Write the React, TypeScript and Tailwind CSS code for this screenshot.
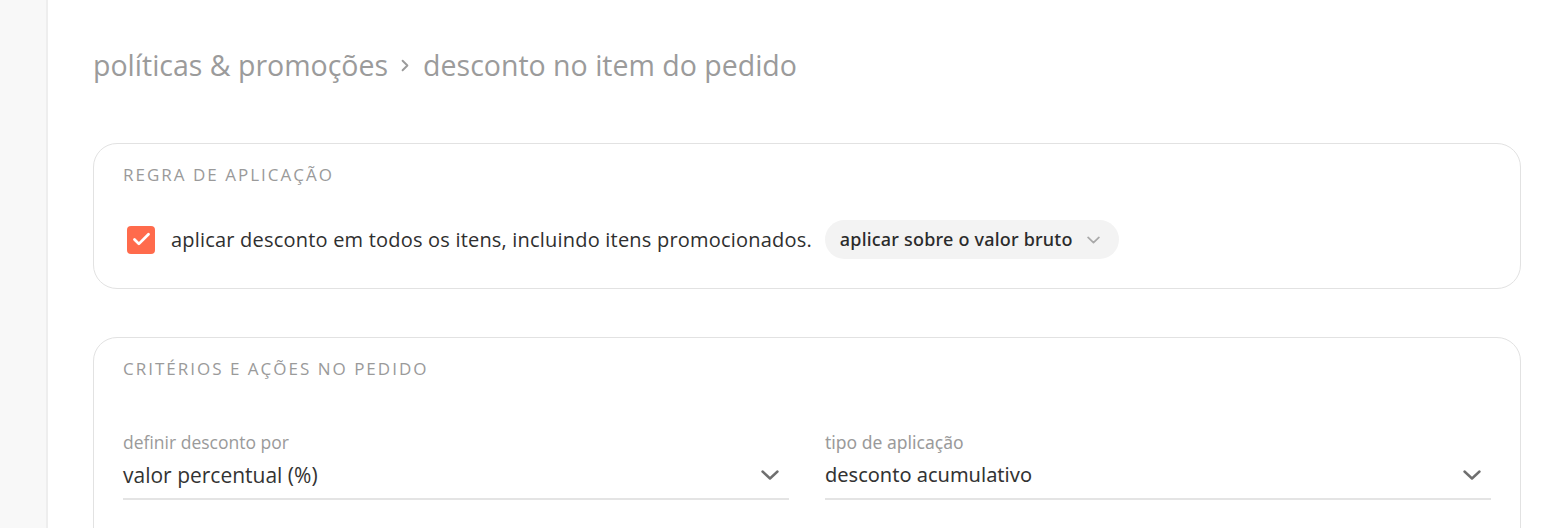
import { Check } from "lucide-react";

const nunito = { fontFamily: '"Open Sans", "Noto Sans", sans-serif' };

function Chevron({ className }: { className?: string }) {
  return (
    <svg viewBox="0 0 18 10" className={className} fill="none">
      <polyline
        points="1.5,1.5 9,8.5 16.5,1.5"
        stroke="currentColor"
        strokeWidth="2.4"
        strokeLinecap="round"
        strokeLinejoin="round"
      />
    </svg>
  );
}

function SelectField({
  label,
  value,
  alt,
}: {
  label: string;
  value: string;
  alt?: boolean;
}) {
  const font = alt ? "font-['Noto_Sans',sans-serif]" : "font-['Open_Sans',sans-serif]";
  return (
    <div className="flex-1">
      <div className={`${font} text-[17.5px] leading-[24px] text-[#9a9a9a]`}>{label}</div>
      <div className="mt-[7px] flex items-center justify-between border-b-2 border-[#e4e4e4] pb-[9px]">
        <span className={`${font} ${alt ? "text-[20px]" : "text-[21px]"} leading-[28px] text-[#333]`}>
          {value}
        </span>
        <Chevron className="mr-[10px] h-[10px] w-[18px] text-[#6f6f6f]" />
      </div>
    </div>
  );
}

export default function App() {
  return (
    <div className="flex h-[528px] overflow-hidden bg-white" style={nunito}>
      <aside className="w-[48px] shrink-0 border-r-2 border-[#eeeeee] bg-[#f8f8f8]" />

      <main className="flex-1 pl-[45px] pr-[47px] pt-[45px]">
        {/* breadcrumb */}
        <div className="flex items-center text-[28.5px] leading-[40px] text-[#9b9b9b]">
          <span>políticas &amp; promoções</span>
          <svg viewBox="0 0 10 16" className="ml-[13px] mr-[14px] h-[13px] w-[8px]" fill="none">
            <polyline
              points="2,2 8,8 2,14"
              stroke="currentColor"
              strokeWidth="2.4"
              strokeLinecap="round"
              strokeLinejoin="round"
            />
          </svg>
          <span>desconto no item do pedido</span>
        </div>

        {/* regra de aplicação */}
        <section className="mt-[58px] rounded-[24px] border border-[#e2e2e2] px-[29px] pb-[29px] pt-[20px]">
          <h3 className="text-[17px] uppercase leading-[22px] tracking-[2px] text-[#9a9a9a]">
            regra de aplicação
          </h3>
          <div className="mt-[34px] flex items-center">
            <span className="ml-[4px] flex h-[28px] w-[28px] items-center justify-center rounded-[4px] bg-[#ff6b4c]">
              <Check className="h-[21px] w-[21px] text-white" strokeWidth={3.2} />
            </span>
            <span className="ml-[16px] text-[20px] leading-[28px] tracking-[0.2px] text-[#2f2f2f]">
              aplicar desconto em todos os itens, incluindo itens promocionados.
            </span>
            <button className="ml-[13px] flex h-[39px] items-center rounded-full bg-[#f3f3f3] pl-[15px] pr-[19px] font-['Noto_Sans',sans-serif] text-[18px] font-medium tracking-[0.2px] text-[#2b2b2b]">
              aplicar sobre o valor bruto
              <Chevron className="ml-[14px] h-[8px] w-[13px] text-[#a8a8a8]" />
            </button>
          </div>
        </section>

        {/* critérios e ações */}
        <section className="mt-[48px] h-[300px] rounded-[24px] border border-[#e2e2e2] px-[29px] pt-[20px]">
          <h3 className="text-[17px] uppercase leading-[22px] tracking-[2px] text-[#9a9a9a]">
            critérios e ações no pedido
          </h3>
          <div className="mt-[50px] flex gap-[36px]">
            <SelectField label="definir desconto por" value="valor percentual (%)" />
            <SelectField label="tipo de aplicação" value="desconto acumulativo" alt />
          </div>
        </section>
      </main>
    </div>
  );
}
